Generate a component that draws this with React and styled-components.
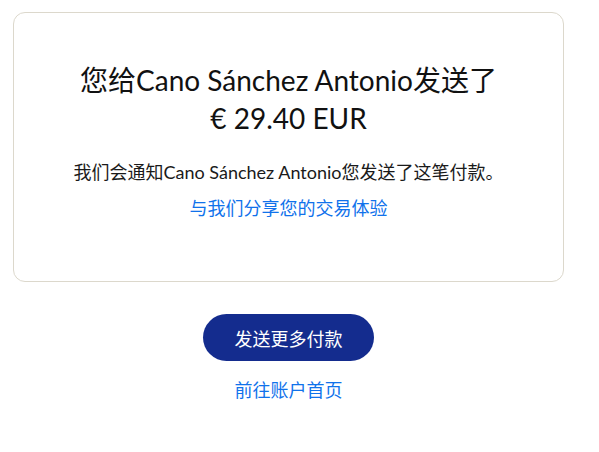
import React from 'react'
import styled, { createGlobalStyle } from 'styled-components'

const GlobalStyle = createGlobalStyle`
body {
  margin: 0;
  background: #ffffff;
  font-family: Lato, "Noto Sans CJK SC", sans-serif;
  color: #1a1a1a;
}
`

const Page = styled.div`
width: 551px;
margin: 12px 0 0 13px;
display: flex;
flex-direction: column;
align-items: center;
`

const Card = styled.div`
box-sizing: border-box;
width: 100%;
height: 270px;
border: 1px solid #dcd8cc;
border-radius: 12px;
display: flex;
flex-direction: column;
align-items: center;
padding-top: 48px;
`

const Title = styled.h1`
margin: 0;
font-size: 28px;
font-weight: 400;
line-height: 38px;
text-align: center;
color: #111;
`

const Note = styled.p`
margin: 23px 0 0;
font-size: 18px;
line-height: 24px;
text-align: center;
`

const TextLink = styled.a`
display: block;
margin-top: ${props => props.gap || 0}px;
font-size: 18px;
line-height: 24px;
color: #1072eb;
text-decoration: none;
cursor: pointer;
`

const PrimaryButton = styled.button`
margin-top: 32px;
width: 171px;
height: 47px;
border: none;
border-radius: 24px;
background: #142c8e;
color: #fff;
font-family: inherit;
font-size: 18px;
cursor: pointer;
`

const App = () => {
    return (
        <Page>
            <GlobalStyle />
            <Card>
                <Title>您给Cano Sánchez Antonio发送了<br />€ 29.40 EUR</Title>
                <Note>我们会通知Cano Sánchez Antonio您发送了这笔付款。</Note>
                <TextLink gap={12}>与我们分享您的交易体验</TextLink>
            </Card>
            <PrimaryButton>发送更多付款</PrimaryButton>
            <TextLink gap={17}>前往账户首页</TextLink>
        </Page>
    )
}

export default App
